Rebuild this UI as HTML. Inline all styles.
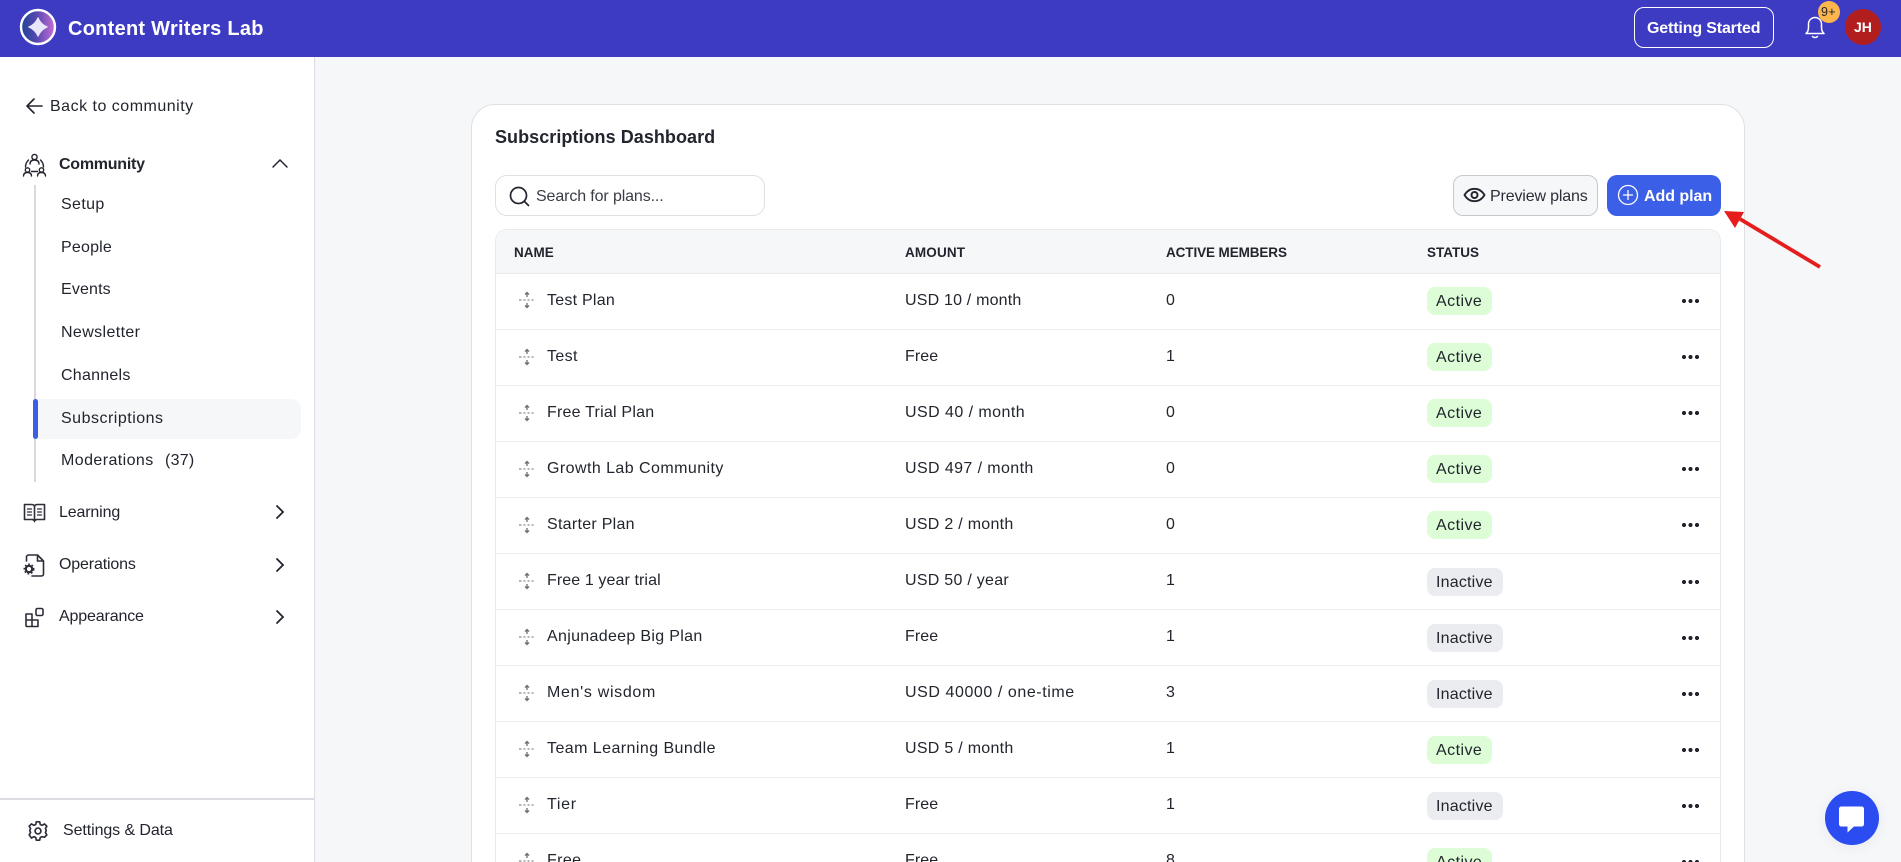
<!DOCTYPE html>
<html lang="en">
<head>
<meta charset="utf-8">
<title>Subscriptions Dashboard</title>
<style>
html,body{margin:0;padding:0;width:1901px;height:862px;overflow:hidden;background:#f6f7f9;font-family:"Liberation Sans",sans-serif;color:#23252e}
*{box-sizing:border-box}
#page{position:relative;width:1901px;height:862px;overflow:hidden;background:#f6f7f9}
.a{position:absolute}
.t{position:absolute;white-space:nowrap;line-height:23px;font-size:16px}
svg{position:absolute;display:block}
#hd{left:0;top:0;width:1901px;height:57px;background:#3e3bc3}
#sb{left:0;top:57px;width:315px;height:805px;background:#fff;border-right:1px solid #dcdce3}
.n{left:61px;letter-spacing:.38px}
.m{left:59px;letter-spacing:-.15px}
#card{left:471px;top:104px;width:1274px;height:800px;background:#fff;border:1px solid #dfe0e3;border-radius:24px}
#tb{left:495px;top:229px;width:1226px;height:700px;background:#fff;border:1px solid #e9eaed;border-radius:12px 12px 0 0;overflow:hidden}
#th{left:0;top:0;width:1224px;height:44px;background:#f6f7f9;border-bottom:1px solid #e9eaed}
.h{font-size:13.5px;font-weight:bold;top:241px;color:#23252e;letter-spacing:0}
.r{left:495px;width:1226px;height:1px;background:#ebecee}
.nm{left:547px;letter-spacing:.38px}.am{left:905px;letter-spacing:.4px}.ac{left:1166px}
.b{position:absolute;left:1427px;height:28px;border-radius:8px;font-size:16px;line-height:29px;padding-left:9px;color:#23252e}
.on{width:65px;background:#dcfdd6;letter-spacing:.45px}
.off{width:76px;background:#ebecf0;letter-spacing:.2px}
.d{position:absolute;left:1682px;width:17px;height:4px;background:radial-gradient(circle at 2px 2px,#23252e 2px,transparent 2.2px) 0 0/6.5px 4px repeat-x}
</style>
</head>
<body>
<div id="page">
<div id="hd" class="a"></div>
<svg style="left:18px;top:8px" width="40" height="38" viewBox="0 0 40 38">
<defs><linearGradient id="g" x1="0" y1="0" x2="1" y2="0"><stop offset="0" stop-color="#1f4595"/><stop offset=".45" stop-color="#5548b0"/><stop offset="1" stop-color="#c66ed6"/></linearGradient></defs>
<circle cx="20" cy="19" r="17" fill="url(#g)" stroke="#fff" stroke-width="2.4"/>
<path d="M20 9.500Q22.800 16.200 29.500 19 22.800 21.800 20 28.500 17.200 21.800 10.500 19 17.200 16.200 20 9.500Z" fill="#e9e6fb" stroke="#e9e6fb" stroke-width=".8" stroke-linejoin="round"/>
</svg>
<div class="t" style="left:68px;top:18px;font-size:20px;font-weight:bold;color:#fff;letter-spacing:.26px">Content Writers Lab</div>
<div class="a" style="left:1634px;top:7px;width:140px;height:41px;border:1.5px solid #fff;border-radius:10px"></div>
<div class="t" style="left:1647px;top:17px;color:#fff;font-weight:bold;font-size:16px;letter-spacing:-.15px">Getting Started</div>
<svg style="left:1804px;top:15px" width="22" height="24" viewBox="0 0 22 24" fill="none" stroke="#fff" stroke-width="1.5" stroke-linecap="round" stroke-linejoin="round"><path d="M2 18.500c2-1.500 2.500-3.500 2.500-6.500V9a6.500 6.500 0 0 1 13 0v3c0 3 .5 5 2.500 6.500Z"/><path d="M8.500 21.500c1.200 1.400 3.800 1.400 5 0"/></svg>
<div class="a" style="left:1818px;top:1px;width:22px;height:22px;border-radius:50%;background:#fdb54e"></div>
<div class="t" style="left:1821px;top:3px;font-size:12.5px;line-height:18px;color:#23252e;letter-spacing:.3px">9+</div>
<div class="a" style="left:1845px;top:9px;width:36px;height:36px;border-radius:50%;background:#b21d1e"></div>
<div class="t" style="left:1854px;top:17px;font-size:14px;line-height:20px;font-weight:bold;color:#fff">JH</div>

<div id="sb" class="a"></div>
<svg style="left:25px;top:96px" width="20" height="20" viewBox="0 0 20 20" fill="none" stroke="#23252e" stroke-width="1.6" stroke-linecap="round" stroke-linejoin="round"><path d="M17 10H2.500M9 3 2 10l7 7"/></svg>
<div class="t" style="left:50px;top:95px;letter-spacing:.5px">Back to community</div>
<svg style="left:22px;top:152px" width="25" height="25" viewBox="0 0 25 25" fill="none" stroke="#23252e" stroke-width="1.4" stroke-linecap="round"><circle cx="12.500" cy="5" r="2.600"/><path d="M8 12c0-3 2-4 4.500-4s4.500 1 4.500 4"/><path d="M6.500 8C4.500 10 3.500 12 3.500 15M18.500 8c2 2 3 4 3 7M9.500 19.500h6"/><circle cx="5.500" cy="18" r="2.200"/><circle cx="19.500" cy="18" r="2.200"/><path d="M1.500 24c0-2.500 1.500-3.500 4-3.500s4 1 4 3.500M15.500 24c0-2.500 1.500-3.500 4-3.500s4 1 4 3.500"/></svg>
<div class="t m" style="top:153px;font-weight:bold;letter-spacing:-.25px">Community</div>
<svg style="left:271px;top:156px" width="18" height="14" viewBox="0 0 18 14" fill="none" stroke="#23252e" stroke-width="1.500" stroke-linecap="round"><path d="M2 11 9 4l7 7"/></svg>
<div class="a" style="left:34px;top:185px;width:2px;height:297px;background:#dcd8d9"></div>
<div class="t n" style="top:193px">Setup</div>
<div class="t n" style="top:236px;letter-spacing:.2px">People</div>
<div class="t n" style="top:278px;letter-spacing:.15px">Events</div>
<div class="t n" style="top:321px">Newsletter</div>
<div class="t n" style="top:364px;letter-spacing:.25px">Channels</div>
<div class="a" style="left:33px;top:399px;width:268px;height:40px;background:#f6f7f9;border-radius:0 10px 10px 0"></div>
<div class="a" style="left:33px;top:399px;width:5px;height:40px;background:#3b5de7;border-radius:3px"></div>
<div class="t n" style="top:407px;letter-spacing:.5px">Subscriptions</div>
<div class="t n" style="top:449px;letter-spacing:.42px">Moderations</div>
<div class="t" style="left:165px;top:449px;letter-spacing:.25px">(37)</div>
<svg style="left:23px;top:502px" width="23" height="22" viewBox="0 0 23 22" fill="none" stroke="#2c2d38" stroke-width="1.600" stroke-linecap="round" stroke-linejoin="round"><path d="M1.500 2.500h7c1.500 0 3 .8 3 2.200 0-1.400 1.500-2.200 3-2.200h7v15h-8l-2 1-2-1h-8ZM11.500 4.700V19.500"/><path d="M4.500 7h4M4.500 10h4M4.500 13h4M14.500 7h4M14.500 10h4M14.500 13h4" stroke-width="1.200"/></svg>
<div class="t m" style="top:501px">Learning</div>
<svg style="left:274px;top:504px" width="12" height="16" viewBox="0 0 12 16" fill="none" stroke="#23252e" stroke-width="1.800" stroke-linecap="round"><path d="M3 2l6 6-6 6"/></svg>
<svg style="left:23px;top:553px" width="22" height="24" viewBox="0 0 22 24" fill="none" stroke="#2c2d38" stroke-width="1.600" stroke-linecap="round" stroke-linejoin="round"><path d="M3.500 8V4c0-1 .7-2 2-2h9l6 6v13c0 1-.7 2-2 2H9M14.500 2.500V8h5.500"/><circle cx="6" cy="16" r="3.200" stroke-width="2.200"/><circle cx="6" cy="16" r="4.800" stroke-width="1.400" stroke-dasharray="1.800 1.800" stroke-linecap="butt"/></svg>
<div class="t m" style="top:553px">Operations</div>
<svg style="left:274px;top:557px" width="12" height="16" viewBox="0 0 12 16" fill="none" stroke="#23252e" stroke-width="1.800" stroke-linecap="round"><path d="M3 2l6 6-6 6"/></svg>
<svg style="left:24px;top:607px" width="21" height="21" viewBox="0 0 21 21" fill="none" stroke="#2c2d38" stroke-width="1.600" stroke-linejoin="round"><path d="M2 7h6v6h6v6.500H3c-.6 0-1-.4-1-1ZM8 13H2M8 13v6.500"/><rect x="12" y="1.500" width="7" height="7" rx="1.500"/></svg>
<div class="t m" style="top:605px">Appearance</div>
<svg style="left:274px;top:609px" width="12" height="16" viewBox="0 0 12 16" fill="none" stroke="#23252e" stroke-width="1.800" stroke-linecap="round"><path d="M3 2l6 6-6 6"/></svg>
<div class="a" style="left:0;top:798px;width:314px;height:2px;background:#dcdce3"></div>
<svg style="left:28px;top:821px" width="20" height="20" viewBox="0 0 24 24" fill="none" stroke="#2c2d38" stroke-width="2" stroke-linejoin="round"><circle cx="12" cy="12" r="3.500"/><path d="M10 1.500h4l.7 3.200 2.300 1 2.800-1.700 2.800 2.800L20.900 9.600l1 2.400-1 2.400 1.700 2.800-2.800 2.800L17 19.300l-2.300 1-.7 3.200h-4l-.7-3.200-2.300-1-2.800 1.700L1.400 17.200l1.700-2.800-1-2.400 1-2.400L1.400 6.800l2.800-2.800L7 5.700l2.300-1Z" transform="translate(0 -.5)"/></svg>
<div class="t" style="left:63px;top:819px;letter-spacing:-.09px">Settings &amp; Data</div>

<div id="card" class="a"></div>
<div class="t" style="left:495px;top:126px;font-size:18px;font-weight:bold;letter-spacing:.05px">Subscriptions Dashboard</div>
<div class="a" style="left:495px;top:175px;width:270px;height:41px;border:1px solid #dfe0e3;border-radius:12px;background:#fff"></div>
<svg style="left:509px;top:186px" width="21" height="21" viewBox="0 0 21 21" fill="none" stroke="#23252e" stroke-width="1.700" stroke-linecap="round"><circle cx="9.500" cy="9.500" r="8"/><path d="M15.500 15.500l4 4"/></svg>
<div class="t" style="left:536px;top:185px;color:#3a3c46;letter-spacing:-.12px">Search for plans...</div>
<div class="a" style="left:1453px;top:175px;width:145px;height:41px;border:1px solid #c8c9ce;border-radius:10px;background:#f6f7f9"></div>
<svg style="left:1463px;top:184px" width="23" height="22" viewBox="0 0 23 22" fill="none" stroke="#23252e" stroke-width="1.800"><path d="M1.500 11C4 6.800 7.500 4.800 11.500 4.800S19 6.800 21.500 11C19 15.200 15.500 17.200 11.500 17.200S4 15.200 1.500 11Z"/><circle cx="11.500" cy="11" r="3" stroke-width="2"/></svg>
<div class="t" style="left:1490px;top:185px;letter-spacing:-.15px;color:#2c2d38">Preview plans</div>
<div class="a" style="left:1607px;top:175px;width:114px;height:41px;border-radius:10px;background:#3b5fe6"></div>
<svg style="left:1617px;top:184px" width="22" height="22" viewBox="0 0 22 22" fill="none" stroke="#fff" stroke-width="1.300" stroke-linecap="round"><circle cx="11" cy="11" r="9.500"/><path d="M11 6.500v9M6.500 11h9"/></svg>
<div class="t" style="left:1644px;top:185px;font-weight:bold;color:#fff;letter-spacing:-.05px">Add plan</div>
<svg style="left:1715px;top:205px" width="112" height="70" viewBox="0 0 112 70"><path d="M105 62 25 14" stroke="#e61d1d" stroke-width="3.800"/><path d="M9 6 29 7 20 23Z" fill="#e61d1d"/></svg>

<div id="tb" class="a"><div id="th" class="a"></div></div>
<div class="t h" style="left:514px">NAME</div>
<div class="t h" style="left:905px;letter-spacing:.15px">AMOUNT</div>
<div class="t h" style="left:1166px;letter-spacing:-.1px">ACTIVE MEMBERS</div>
<div class="t h" style="left:1427px">STATUS</div>

<div class="a r" style="top:329px"></div>
<div class="a r" style="top:385px"></div>
<div class="a r" style="top:441px"></div>
<div class="a r" style="top:497px"></div>
<div class="a r" style="top:553px"></div>
<div class="a r" style="top:609px"></div>
<div class="a r" style="top:665px"></div>
<div class="a r" style="top:721px"></div>
<div class="a r" style="top:777px"></div>
<div class="a r" style="top:833px"></div>

<svg width="0" height="0" style="position:absolute"><defs><g id="dr" fill="none" stroke="#6a6b74" stroke-width="1.100"><path d="M0 9h2.500M4.500 9h2M8.500 9h2M12.500 9h2"/><path d="M8 1.500v4.500M6 3.500 8 1.500l2 2M8 16.500V12M6 14.500 8 16.500l2-2" stroke-width="1.300"/></g></defs></svg>

<svg style="left:519px;top:291px" width="17" height="18"><use href="#dr"/></svg>
<div class="t nm" style="top:289px;letter-spacing:.24px">Test Plan</div><div class="t am" style="top:289px;letter-spacing:.19px">USD 10 / month</div><div class="t ac" style="top:289px">0</div><div class="b on" style="top:287px">Active</div><div class="d" style="top:299px"></div>

<svg style="left:519px;top:348px" width="17" height="18"><use href="#dr"/></svg>
<div class="t nm" style="top:345px">Test</div><div class="t am" style="top:345px;letter-spacing:.1px">Free</div><div class="t ac" style="top:345px">1</div><div class="b on" style="top:343px">Active</div><div class="d" style="top:355px"></div>

<svg style="left:519px;top:404px" width="17" height="18"><use href="#dr"/></svg>
<div class="t nm" style="top:401px;letter-spacing:.22px">Free Trial Plan</div><div class="t am" style="top:401px;letter-spacing:.45px">USD 40 / month</div><div class="t ac" style="top:401px">0</div><div class="b on" style="top:399px">Active</div><div class="d" style="top:411px"></div>

<svg style="left:519px;top:460px" width="17" height="18"><use href="#dr"/></svg>
<div class="t nm" style="top:457px;letter-spacing:.44px">Growth Lab Community</div><div class="t am" style="top:457px">USD 497 / month</div><div class="t ac" style="top:457px">0</div><div class="b on" style="top:455px">Active</div><div class="d" style="top:467px"></div>

<svg style="left:519px;top:516px" width="17" height="18"><use href="#dr"/></svg>
<div class="t nm" style="top:513px;letter-spacing:.28px">Starter Plan</div><div class="t am" style="top:513px;letter-spacing:.28px">USD 2 / month</div><div class="t ac" style="top:513px">0</div><div class="b on" style="top:511px">Active</div><div class="d" style="top:523px"></div>

<svg style="left:519px;top:572px" width="17" height="18"><use href="#dr"/></svg>
<div class="t nm" style="top:569px;letter-spacing:.1px">Free 1 year trial</div><div class="t am" style="top:569px;letter-spacing:.27px">USD 50 / year</div><div class="t ac" style="top:569px">1</div><div class="b off" style="top:568px">Inactive</div><div class="d" style="top:580px"></div>

<svg style="left:519px;top:628px" width="17" height="18"><use href="#dr"/></svg>
<div class="t nm" style="top:625px;letter-spacing:.32px">Anjunadeep Big Plan</div><div class="t am" style="top:625px;letter-spacing:.1px">Free</div><div class="t ac" style="top:625px">1</div><div class="b off" style="top:624px">Inactive</div><div class="d" style="top:636px"></div>

<svg style="left:519px;top:684px" width="17" height="18"><use href="#dr"/></svg>
<div class="t nm" style="top:681px;letter-spacing:.68px">Men's wisdom</div><div class="t am" style="top:681px;letter-spacing:.57px">USD 40000 / one-time</div><div class="t ac" style="top:681px">3</div><div class="b off" style="top:680px">Inactive</div><div class="d" style="top:692px"></div>

<svg style="left:519px;top:740px" width="17" height="18"><use href="#dr"/></svg>
<div class="t nm" style="top:737px;letter-spacing:.44px">Team Learning Bundle</div><div class="t am" style="top:737px;letter-spacing:.28px">USD 5 / month</div><div class="t ac" style="top:737px">1</div><div class="b on" style="top:736px">Active</div><div class="d" style="top:748px"></div>

<svg style="left:519px;top:796px" width="17" height="18"><use href="#dr"/></svg>
<div class="t nm" style="top:793px;letter-spacing:.7px">Tier</div><div class="t am" style="top:793px;letter-spacing:.1px">Free</div><div class="t ac" style="top:793px">1</div><div class="b off" style="top:792px">Inactive</div><div class="d" style="top:804px"></div>

<svg style="left:519px;top:852px" width="17" height="18"><use href="#dr"/></svg>
<div class="t nm" style="top:849px">Free</div><div class="t am" style="top:849px;letter-spacing:.1px">Free</div><div class="t ac" style="top:849px">8</div><div class="b on" style="top:848px">Active</div><div class="d" style="top:860px"></div>

<div class="a" style="left:1825px;top:791px;width:54px;height:54px;border-radius:50%;background:#2b4cf0;box-shadow:0 2px 12px rgba(40,60,120,.08)"></div>
<svg style="left:1838px;top:805px" width="28" height="30" viewBox="0 0 28 30"><path d="M3.500 1.500h20c1.500 0 2.500 1 2.500 2.500v15c0 1.500-1 2.500-2.500 2.500h-7.500l-6.500 6v-6h-6c-1.500 0-2.500-1-2.500-2.500V4c0-1.500 1-2.500 2.500-2.500Z" fill="#fff"/></svg>
</div>
</body>
</html>
